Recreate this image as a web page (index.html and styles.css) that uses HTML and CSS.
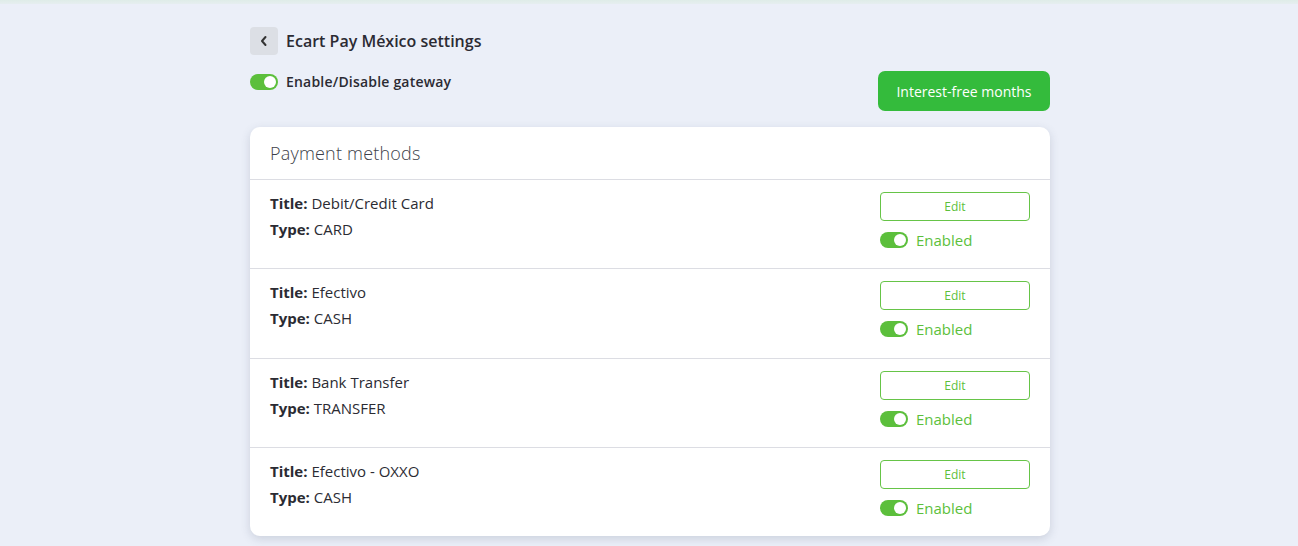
FILE: index.html
```html
<!DOCTYPE html>
<html>
<head>
<meta charset="utf-8">
<link rel="stylesheet" href="styles.css">
</head>
<body>
<div class="topline"></div>
<div class="wrap">
<main class="page">
  <div class="header">
    <button class="back" aria-label="Back">
      <svg width="10" height="12" viewBox="0 0 10 12"><path d="M6.5 2 L3 6 L6.5 10" fill="none" stroke="#333" stroke-width="2" stroke-linecap="round" stroke-linejoin="round"/></svg>
    </button>
    <h1 class="title">Ecart Pay México settings</h1>
  </div>
  <div class="toolbar">
    <label class="gateway"><span class="toggle"></span><span>Enable/Disable gateway</span></label>
    <button class="primary">Interest-free months</button>
  </div>
  <section class="card">
    <h2 class="card-title">Payment methods</h2>
    <div class="row">
      <div class="info">
        <p><b>Title:</b> Debit/Credit Card</p>
        <p><b>Type:</b> CARD</p>
      </div>
      <div class="actions">
        <button class="edit">Edit</button>
        <label class="status"><span class="toggle"></span><span>Enabled</span></label>
      </div>
    </div>
    <div class="row">
      <div class="info">
        <p><b>Title:</b> Efectivo</p>
        <p><b>Type:</b> CASH</p>
      </div>
      <div class="actions">
        <button class="edit">Edit</button>
        <label class="status"><span class="toggle"></span><span>Enabled</span></label>
      </div>
    </div>
    <div class="row">
      <div class="info">
        <p><b>Title:</b> Bank Transfer</p>
        <p><b>Type:</b> TRANSFER</p>
      </div>
      <div class="actions">
        <button class="edit">Edit</button>
        <label class="status"><span class="toggle"></span><span>Enabled</span></label>
      </div>
    </div>
    <div class="row">
      <div class="info">
        <p><b>Title:</b> Efectivo - OXXO</p>
        <p><b>Type:</b> CASH</p>
      </div>
      <div class="actions">
        <button class="edit">Edit</button>
        <label class="status"><span class="toggle"></span><span>Enabled</span></label>
      </div>
    </div>
  </section>
</main>
</div>
</body>
</html>
```

FILE: styles.css
```css
* { box-sizing: border-box; }
html, body { margin: 0; padding: 0; }
body {
  background: #ebeff8;
  font-family: "Open Sans", "Noto Sans", sans-serif;
  color: #2b2b33;
  height: 546px;
  overflow: hidden;
}
.topline {
  height: 4px;
  background: linear-gradient(#dfece8, #e6eef0);
}
.wrap {
  display: flex;
  justify-content: center;
  padding-left: 2px;
}
.page {
  width: 800px;
  padding-top: 23px;
}
.header {
  display: flex;
  align-items: center;
  gap: 8px;
}
.back {
  width: 28px;
  height: 28px;
  border: none;
  border-radius: 4px;
  background: #dcdfe5;
  display: flex;
  align-items: center;
  justify-content: center;
  padding: 0;
}
.title {
  margin: 0;
  font-size: 16px;
  font-weight: 600;
  color: #2b2b33;
}
.toolbar {
  display: flex;
  justify-content: space-between;
  align-items: flex-start;
  margin-top: 16px;
}
.gateway {
  display: flex;
  align-items: center;
  gap: 8px;
  font-size: 14px;
  font-weight: 600;
  margin-top: 1px;
  letter-spacing: 0.2px;
}
.toggle {
  display: inline-block;
  position: relative;
  width: 28px;
  height: 16px;
  border-radius: 8px;
  background: #5cbf3c;
  flex: none;
}
.toggle::after {
  content: "";
  position: absolute;
  right: 2px;
  top: 2px;
  width: 12px;
  height: 12px;
  border-radius: 50%;
  background: #fff;
}
.primary {
  width: 172px;
  height: 40px;
  border: none;
  border-radius: 7px;
  background: #34bb3c;
  color: #fff;
  font-family: inherit;
  font-size: 14px;
  font-weight: 500;
}
.card {
  margin-top: 16px;
  background: #fff;
  border-radius: 10px;
  box-shadow: 0 3px 10px rgba(60, 70, 100, 0.18);
  overflow: hidden;
}
.card-title {
  margin: 0;
  height: 53px;
  padding: 14px 20px 0;
  font-size: 18px;
  font-weight: 300;
  color: #3d3f4a;
  letter-spacing: 0.2px;
  border-bottom: 1px solid #dcdde3;
}
.row {
  display: flex;
  justify-content: space-between;
  padding: 12px 20px 0;
  height: 89.4px;
  border-bottom: 1px solid #dcdde3;
}
.row:last-child { border-bottom: none; height: 88px; }
.info p {
  margin: 0 0 6px;
  font-size: 15px;
  line-height: 20px;
  color: #2b2b33;
}
.info p:first-child { margin-top: 1px; }
.info b { font-weight: 700; }
.actions {
  width: 150px;
  display: flex;
  flex-direction: column;
  gap: 9px;
}
.edit {
  width: 150px;
  height: 29px;
  border: 1px solid #66c447;
  border-radius: 4px;
  background: #fff;
  color: #5cbf3c;
  font-family: inherit;
  font-size: 12px;
}
.status {
  display: flex;
  align-items: center;
  gap: 8px;
  font-size: 15px;
  color: #5cbf3c;
}
```
